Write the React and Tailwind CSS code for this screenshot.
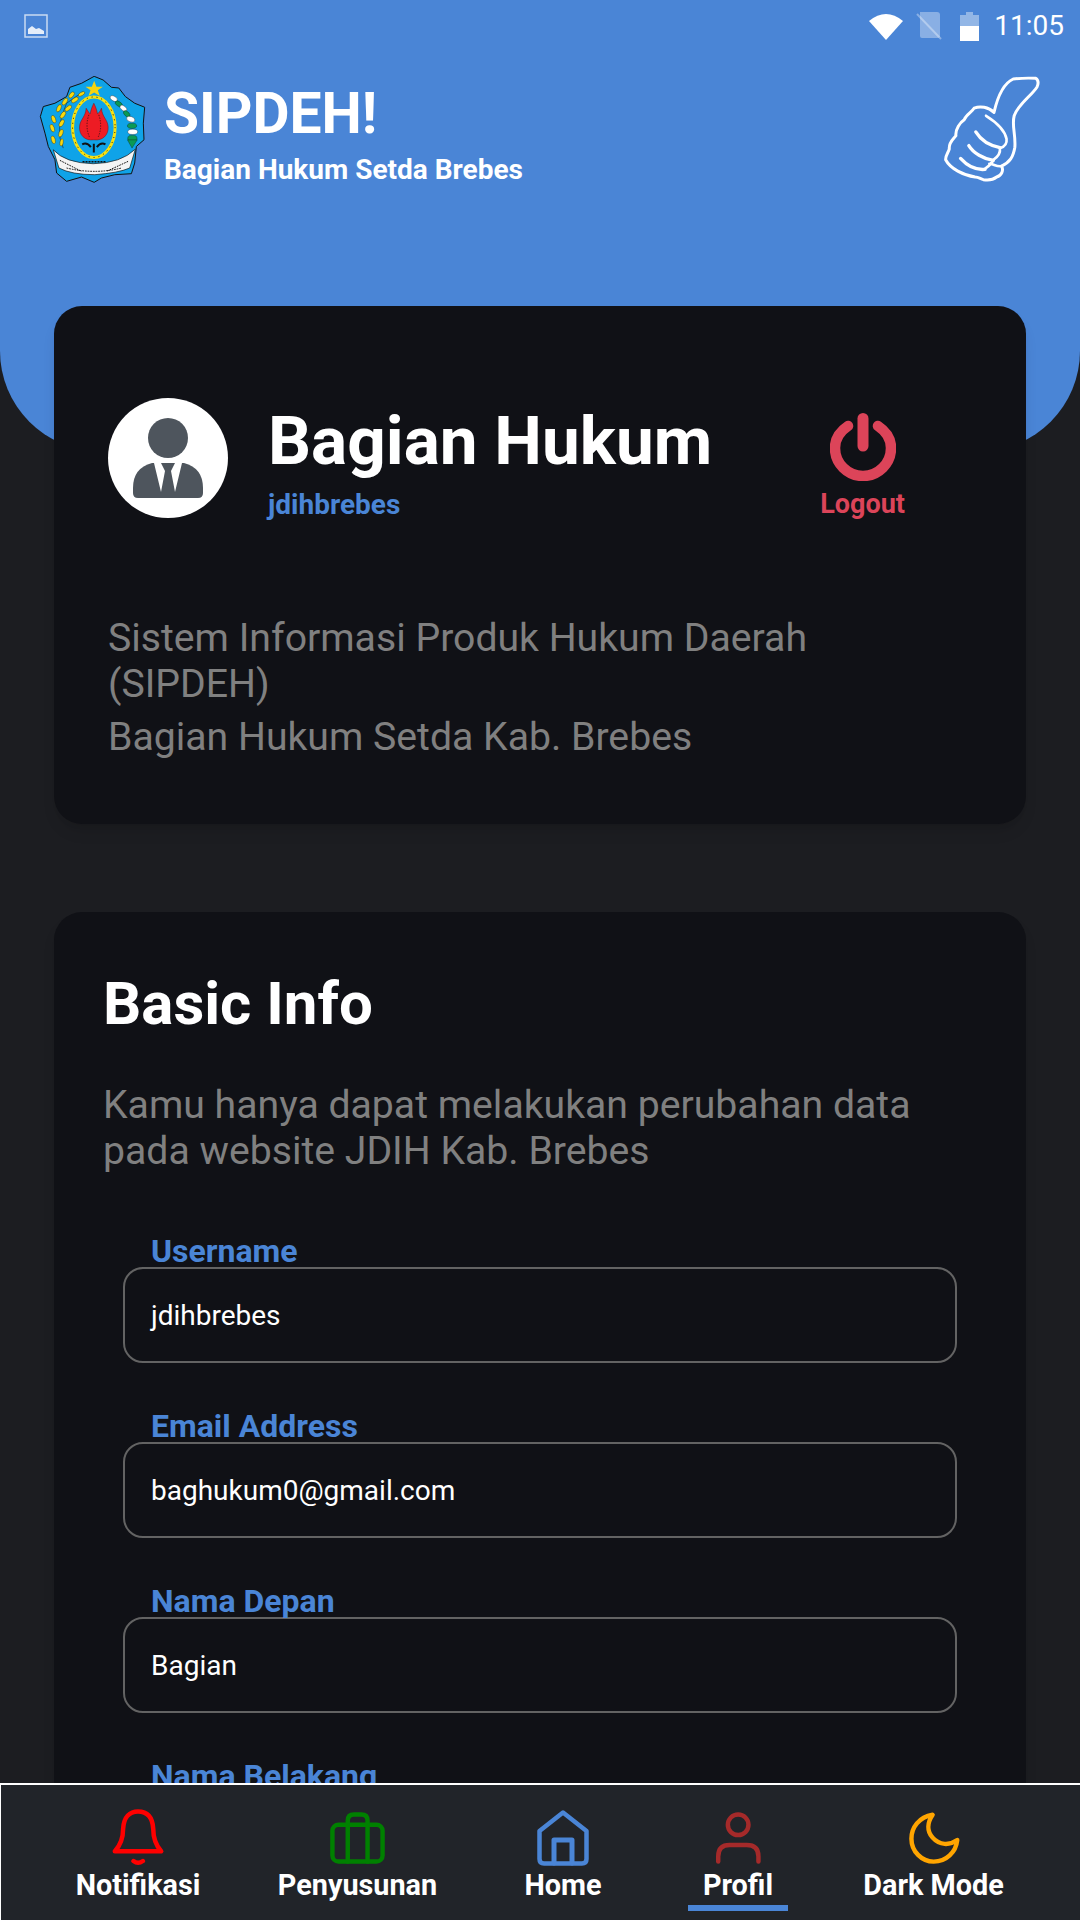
const Logo = () => (
  <svg viewBox="115 228 316 322" className="w-[109px] h-[107px] shrink-0">
    <path d="M278 229 L305 240 L330 262 L352 264 L372 290 L400 310 L430 322 L426 370 L428 420 L405 440 L400 490 L390 522 L340 525 L300 535 L278 548 L240 532 L195 545 L165 520 L160 480 L140 440 L130 400 L116 350 L125 320 L160 310 L195 290 L205 262 L240 250 Z" fill="#0fa3e8" stroke="#111" strokeWidth="3" />
    <polygon points="278,242 285,260 304,260 289,271 295,288 278,278 261,288 267,271 252,260 271,260" fill="#f6d40f" />
    <ellipse cx="277" cy="382" rx="64" ry="91" fill="#0fa3e8" stroke="#f8e10f" strokeWidth="9" />
    <ellipse cx="277" cy="382" rx="64" ry="91" fill="none" stroke="#111" strokeWidth="3" strokeDasharray="3 12" />
    <path d="M277 420 C250 424 232 405 234 380 C236 358 252 352 254 325 C260 335 262 338 266 342 C268 330 272 320 277 310 C282 320 286 330 288 342 C292 338 296 335 300 325 C302 352 318 358 320 380 C322 405 304 424 277 420 Z" fill="#ed1c24" stroke="#7a1012" strokeWidth="1.5" />
    <path d="M262 345 Q250 380 264 412 M292 345 Q304 380 290 412" fill="none" stroke="#111" strokeWidth="2" strokeDasharray="4 4" />
    <path d="M242 434 Q256 426 268 442 M312 434 Q298 426 286 442 M277 432 V458" fill="none" stroke="#111" strokeWidth="6" />
    <path d="M185 445 Q158 390 195 310 L245 275" fill="none" stroke="#111" strokeWidth="1.5" />
    <g fill="#f8d90f" stroke="#111" strokeWidth="1">
      <ellipse cx="152" cy="385" rx="6" ry="12" transform="rotate(-20 152 385)" />
      <ellipse cx="180" cy="370" rx="6" ry="12" transform="rotate(30 180 370)" />
      <ellipse cx="156" cy="358" rx="6" ry="12" transform="rotate(-20 156 358)" />
      <ellipse cx="184" cy="345" rx="6" ry="12" transform="rotate(35 184 345)" />
      <ellipse cx="172" cy="325" rx="6" ry="12" transform="rotate(25 172 325)" />
      <ellipse cx="200" cy="325" rx="6" ry="12" transform="rotate(50 200 325)" />
      <ellipse cx="190" cy="305" rx="6" ry="12" transform="rotate(35 190 305)" />
      <ellipse cx="220" cy="300" rx="6" ry="12" transform="rotate(55 220 300)" />
      <ellipse cx="210" cy="285" rx="6" ry="11" transform="rotate(40 210 285)" />
      <ellipse cx="240" cy="282" rx="5" ry="11" transform="rotate(60 240 282)" />
      <ellipse cx="155" cy="420" rx="6" ry="12" transform="rotate(-15 155 420)" />
      <ellipse cx="178" cy="400" rx="6" ry="12" transform="rotate(20 178 400)" />
      <ellipse cx="180" cy="428" rx="5" ry="11" transform="rotate(10 180 428)" />
    </g>
    <g stroke="#111" strokeWidth="1">
      <ellipse cx="337" cy="296" rx="12" ry="7" fill="#fff" transform="rotate(30 337 296)" />
      <ellipse cx="352" cy="312" rx="12" ry="7" fill="#0a9a55" transform="rotate(35 352 312)" />
      <ellipse cx="366" cy="325" rx="12" ry="7" fill="#fff" transform="rotate(40 366 325)" />
      <ellipse cx="376" cy="342" rx="12" ry="7" fill="#0a9a55" transform="rotate(45 376 342)" />
      <ellipse cx="388" cy="358" rx="13" ry="8" fill="#fff" transform="rotate(20 388 358)" />
      <ellipse cx="392" cy="378" rx="14" ry="8" fill="#0a9a55" />
      <ellipse cx="394" cy="396" rx="15" ry="8" fill="#fff" />
      <ellipse cx="393" cy="415" rx="14" ry="9" fill="#0a9a55" />
      <path d="M378 420 L408 420 L392 445 Z" fill="#0a9a55" />
    </g>
    <path d="M155 450 Q190 490 275 492 Q360 490 402 448 L385 505 Q350 520 280 525 Q210 525 172 505 Z" fill="#f4f4f4" stroke="#111" strokeWidth="2" />
    <path d="M175 482 L240 515 M380 485 L315 515 M195 505 Q280 525 360 505" fill="none" stroke="#111" strokeWidth="3" strokeDasharray="5 3" />
    <path d="M243 486 H315" stroke="#111" strokeWidth="5" strokeDasharray="6 3" />
  </svg>
);

const Thumb = () => (
  <svg viewBox="488 225 296 320" className="w-[98px] h-[106px]" fill="none" stroke="#fff" strokeLinecap="round" strokeLinejoin="round">
    <path strokeWidth="9" d="M642 335 C650 300 665 250 700 234 Q735 230 768 232 Q780 240 772 258 C755 285 715 310 703 345 C695 375 708 400 705 440 C700 470 690 485 665 497 C672 510 665 525 650 530 Q635 542 610 538 C600 535 595 530 585 530 C550 525 510 505 496 478 C495 465 505 455 507 445 C505 425 520 415 527 405 C525 385 540 365 552 357 C558 340 575 335 582 322 C600 315 625 318 642 335 Z" />
    <path strokeWidth="8" d="M618 345 C650 365 675 390 680 415 C682 432 670 440 660 443 C662 460 650 472 640 478 C635 492 625 498 615 505 M665 497 C650 500 640 490 628 490" />
    <path strokeWidth="10" d="M587 394 C600 415 625 435 660 441" />
    <path strokeWidth="10" d="M566 435 C580 458 610 475 640 480" />
    <path strokeWidth="10" d="M541 474 C560 495 585 510 615 507" />
  </svg>
);

const StatusBar = () => (
  <div className="h-[52px] flex items-center pl-[24px] pr-[16px]">
    <svg viewBox="0 0 24 24" className="w-[24px] h-[24px]">
      <rect x="1" y="1" width="22" height="22" fill="none" stroke="#fff" strokeOpacity="0.7" strokeWidth="1.5" />
      <path d="M4 20 V15 L8 12 L12 15 L15 14 L20 17 V20 Z" fill="#fff" fillOpacity="0.85" />
    </svg>
    <div className="ml-auto flex items-center">
      <svg viewBox="0 0 34 28" className="w-[34px] h-[28px]">
        <path d="M0 9 Q17 -5 34 9 L17 28 Z" fill="#fff" />
      </svg>
      <svg viewBox="0 0 26 28" className="w-[26px] h-[28px] ml-[13px]">
        <path d="M4 0 H21 Q24 0 24 3 V24 Q24 26 21 26 H6 Q4 26 4 24 Z" fill="#fff" fillOpacity="0.35" />
        <path d="M1 2 L25 27" stroke="#fff" strokeOpacity="0.35" strokeWidth="2" />
      </svg>
      <svg viewBox="0 0 19 29" className="w-[19px] h-[29px] ml-[18px]">
        <path d="M6 0 H13 V3 H19 V14 H0 V3 H6 Z" fill="#fff" fillOpacity="0.4" />
        <rect x="0" y="14" width="19" height="15" fill="#fff" />
      </svg>
      <span className="ml-[15px] text-[28px] leading-none text-white">11:05</span>
    </div>
  </div>
);

const Field = ({ label, value }) => (
  <div className="mb-[45px]">
    <p className="pl-[97px] pt-[1px] -mb-[1px] text-[32px] leading-[34px] font-bold text-[#4a85d6]">{label}</p>
    <div className="ml-[69px] w-[834px] h-[96px] pt-[2px] rounded-[20px] border-2 border-[#636363] pl-[26px] flex items-center text-[28px] text-white">
      {value}
    </div>
  </div>
);

const navStroke = { fill: 'none', strokeWidth: 13, strokeLinecap: 'round', strokeLinejoin: 'round' };

const NavItem = ({ label, icon, className }) => (
  <div className={`flex flex-col items-center ${className}`}>
    <div className="h-[59px] flex items-center justify-center">{icon}</div>
    <span className="text-[28.8px] leading-[36px] font-bold text-white whitespace-nowrap">{label}</span>
  </div>
);

const BottomNav = () => (
  <div className="absolute left-0 right-0 bottom-0 h-[137px] bg-[#212429] border-t-2 border-l border-white flex items-start pl-[75px] pt-[23px]">
    <NavItem
      label="Notifikasi"
      className="w-[124px]"
      icon={
        <svg viewBox="325 140 156 170" className="w-[54px] h-[59px]" stroke="#ff0000" {...navStroke}>
          <path d="M336 265 C355 245 360 220 360 200 C362 165 380 150 403 150 C428 150 445 165 447 200 C447 220 452 245 470 265 Z" />
          <path d="M390 293 Q403 303 417 293" />
        </svg>
      }
    />
    <NavItem
      label="Penyusunan"
      className="w-[159px] ml-[78px]"
      icon={
        <svg viewBox="955 148 170 156" className="w-[58px] h-[54px]" stroke="#008000" {...navStroke}>
          <rect x="965" y="187" width="147" height="108" rx="18" />
          <path d="M1010 295 V175 Q1010 157 1028 157 H1050 Q1068 157 1068 175 V295" />
        </svg>
      }
    />
    <NavItem
      label="Home"
      className="w-[76px] ml-[88px]"
      icon={
        <svg viewBox="0 0 52 56" className="w-[52px] h-[56px]" fill="none" stroke="#4a85d6" strokeLinecap="round" strokeLinejoin="round">
          <path strokeWidth="4.5" d="M2.5 21 L26 2.5 L49.5 21 V49 Q49.5 53.5 45 53.5 H7 Q2.5 53.5 2.5 49 Z" />
          <path strokeWidth="5" d="M17 53 V30 H35 V53" />
        </svg>
      }
    />
    <div className="w-[100px] ml-[87px] flex flex-col items-center">
      <NavItem
        label="Profil"
        icon={
          <svg viewBox="505 145 142 160" className="w-[49px] h-[55px]" stroke="#a52a2a" {...navStroke}>
            <circle cx="575" cy="188" r="30" />
            <path d="M517 295 V280 Q517 247 550 247 H600 Q634 247 634 280 V295" />
          </svg>
        }
      />
      <div className="w-[100px] h-[6px] mt-[2px] bg-[#4a85d6]" />
    </div>
    <NavItem
      label="Dark Mode"
      className="w-[141px] ml-[75px]"
      icon={
        <svg viewBox="1068 148 152 156" className="w-[52px] h-[54px]" stroke="#ffa500" {...navStroke}>
          <path d="M1140 158 C1100 165 1078 195 1078 228 C1078 265 1108 295 1143 295 C1180 295 1208 268 1212 232 C1190 248 1160 248 1140 225 C1122 205 1125 180 1140 158 Z" />
        </svg>
      }
    />
  </div>
);

export default function App() {
  return (
    <div className="relative w-[1080px] h-[1920px] overflow-hidden bg-[#1c1d21] font-[family-name:Roboto,sans-serif]">
      <div className="h-[451px] bg-[#4a85d6] rounded-b-[100px]">
        <StatusBar />
        <div className="flex items-start pl-[38px] pr-[39px] pt-[24px]">
          <Logo />
          <div className="ml-[17px] pt-[5px]">
            <h1 className="text-[57px] leading-[66px] font-bold text-white">SIPDEH!</h1>
            <p className="mt-[6px] text-[28px] leading-[33px] font-bold text-white">Bagian Hukum Setda Brebes</p>
          </div>
          <div className="ml-auto">
            <Thumb />
          </div>
        </div>
      </div>

      <div className="-mt-[145px] mx-[54px] h-[518px] bg-[#101116] rounded-[28px] shadow-lg pt-[92px] pl-[54px]">
        <div className="flex items-start">
          <div className="w-[120px] h-[120px] rounded-full bg-white flex items-center justify-center shrink-0">
            <svg viewBox="0 0 70 80" className="w-[70px] h-[80px]" fill="#4e555d">
              <circle cx="35" cy="20" r="20" />
              <path d="M19 45 Q0 50 0 70 V75 Q0 80 5 80 H65 Q70 80 70 75 V70 Q70 50 51 45 Z" />
              <path d="M21 45 L28 74 L32 53 L28 45 Z M49 45 L42 74 L38 53 L42 45 Z" fill="#fff" />
            </svg>
          </div>
          <div className="ml-[40px] pt-[7px]">
            <h2 className="text-[67.5px] leading-[72px] font-bold text-white whitespace-nowrap">Bagian Hukum</h2>
            <p className="mt-[13px] text-[28px] leading-[30px] font-bold text-[#4a85d6]">jdihbrebes</p>
          </div>
          <div className="ml-[108px] pt-[15px] flex flex-col items-center">
            <svg viewBox="0 0 66 68" className="w-[66px] h-[68px]" fill="none" stroke="#dc4459" strokeLinecap="round">
              <path strokeWidth="10.5" d="M18 13 C9 19 5 27 5 35 A28 28 0 0 0 61 35 C61 27 57 19 48 13" />
              <path strokeWidth="11" d="M33 5.5 V33" />
            </svg>
            <span className="mt-[8px] text-[27px] leading-[30px] font-bold text-[#dc4459]">Logout</span>
          </div>
        </div>
        <div className="mt-[95px] pr-[100px] text-[39.2px] leading-[46px] text-[#808080]">
          <p>Sistem Informasi Produk Hukum Daerah (SIPDEH)</p>
          <p className="mt-[7px]">Bagian Hukum Setda Kab. Brebes</p>
        </div>
      </div>

      <div className="mt-[88px] mx-[54px] bg-[#101116] rounded-[28px] shadow-lg pt-[60px]">
        <h2 className="pl-[49px] text-[60px] leading-[64px] font-bold text-white">Basic Info</h2>
        <p className="mt-[46px] pl-[49px] pr-[100px] text-[39.2px] leading-[46px] text-[#808080]">
          Kamu hanya dapat melakukan perubahan data pada website JDIH Kab. Brebes
        </p>
        <div className="mt-[59px]">
          <Field label="Username" value="jdihbrebes" />
          <Field label="Email Address" value="baghukum0@gmail.com" />
          <Field label="Nama Depan" value="Bagian" />
          <Field label="Nama Belakang" value="Hukum" />
        </div>
      </div>

      <BottomNav />
    </div>
  );
}
